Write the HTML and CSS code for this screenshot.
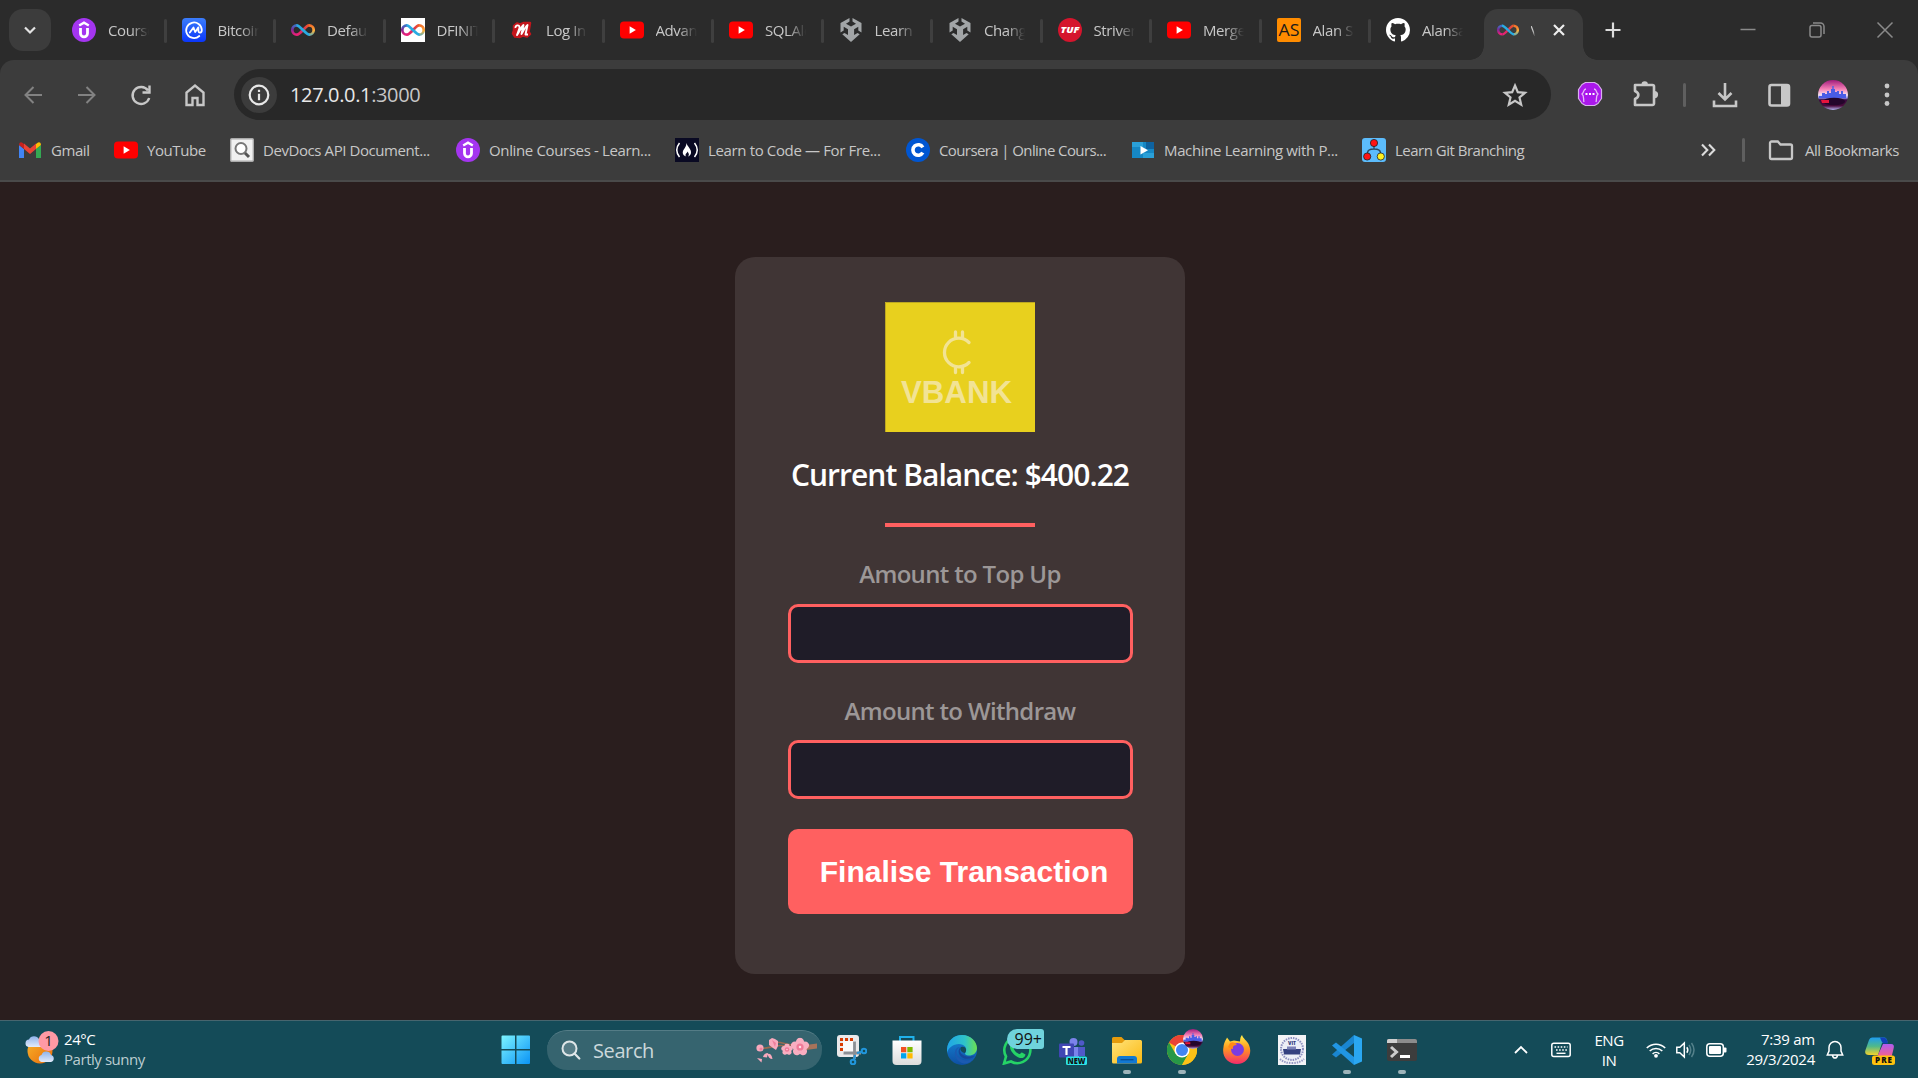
FILE: index.html
```html
<!DOCTYPE html>
<html lang="en">
<head>
<meta charset="utf-8">
<title>VBANK</title>
<link rel="stylesheet" href="styles.css">
</head>
<body>
<svg class="defs" width="0" height="0" aria-hidden="true">
  <defs>
    <linearGradient id="win" x2="1" y2="1"><stop offset="0" stop-color="#7df4ff"/><stop offset="1" stop-color="#0a93f5"/></linearGradient>
    <linearGradient id="cmc" x2="0" y2="1"><stop offset="0" stop-color="#3b7dfb"/><stop offset="1" stop-color="#0a36fa"/></linearGradient>
    <linearGradient id="edgeA" x2="1" y2="0"><stop offset="0" stop-color="#1fa5e8"/><stop offset=".6" stop-color="#2fc3c8"/><stop offset="1" stop-color="#6ce04e"/></linearGradient>
    <linearGradient id="edgeB" x2="0" y2="1"><stop offset="0" stop-color="#1688d8"/><stop offset="1" stop-color="#0e4fa3"/></linearGradient>
    <linearGradient id="fold" x2="1" y2="1"><stop offset="0" stop-color="#ffe37a"/><stop offset="1" stop-color="#fbb912"/></linearGradient>
    <linearGradient id="fox" x2="0" y2="1"><stop offset="0" stop-color="#fff04a"/><stop offset=".45" stop-color="#ff9a1f"/><stop offset="1" stop-color="#f52a6b"/></linearGradient>
    <linearGradient id="sun" x2="1" y2="1"><stop offset="0" stop-color="#f7b52b"/><stop offset="1" stop-color="#ea6a0a"/></linearGradient>
    <linearGradient id="cloud" x2="0" y2="1"><stop offset="0" stop-color="#8fb4ec"/><stop offset="1" stop-color="#e3ebfa"/></linearGradient>
    <linearGradient id="sky" x2="0" y2="1"><stop offset="0" stop-color="#a01c7c"/><stop offset=".3" stop-color="#f47fb5"/><stop offset=".5" stop-color="#f6e2f0"/><stop offset=".6" stop-color="#8f8cf0"/><stop offset=".66" stop-color="#3a0a40"/><stop offset=".86" stop-color="#4a0b3c"/><stop offset="1" stop-color="#b9b6f8"/></linearGradient>
    <linearGradient id="copA" x2="0" y2="1"><stop offset="0" stop-color="#1e9cf0"/><stop offset=".5" stop-color="#4fb98a"/><stop offset="1" stop-color="#f4d22c"/></linearGradient>
    <linearGradient id="copB" x2="0" y2="1"><stop offset="0" stop-color="#b05cf0"/><stop offset="1" stop-color="#f7608a"/></linearGradient>
    <linearGradient id="bag" x2="0" y2="1"><stop offset="0" stop-color="#fff"/><stop offset="1" stop-color="#dcdcdc"/></linearGradient>
    <linearGradient id="infL" x2="0" y2="1"><stop offset="0" stop-color="#3f6fc4"/><stop offset=".45" stop-color="#7a2a9a"/><stop offset="1" stop-color="#ed1e79"/></linearGradient>
    <linearGradient id="infR" x2="0" y2="1"><stop offset="0" stop-color="#f4702a"/><stop offset=".6" stop-color="#fbb03b"/><stop offset="1" stop-color="#7ab0a0"/></linearGradient>
    <linearGradient id="infB" x2="1" y2="0"><stop offset="0" stop-color="#ed1e79"/><stop offset=".5" stop-color="#d8305a"/><stop offset="1" stop-color="#f15a24"/></linearGradient>
    <symbol id="youtube" viewBox="0 0 24 24"><rect x="0" y="3.500" width="24" height="17" rx="4" fill="#f00"/><path d="M9.600 8.300v7.400l6.300-3.700z" fill="#fff"/></symbol>
    <symbol id="udemy" viewBox="0 0 24 24"><circle cx="12" cy="12" r="12" fill="#a435f0"/><path d="M7.200 7.600 12 4.700l4.800 2.900" fill="none" stroke="#fff" stroke-width="2.300"/><path d="M8.500 10v5.200a3.500 3.700 0 0 0 7 0V10" fill="none" stroke="#fff" stroke-width="2.800"/></symbol>
    <symbol id="infinity" viewBox="0 0 24 24"><g fill="none" stroke-width="2.700"><path d="M6 16.700C9.500 16.700 14.500 7.300 18 7.300" stroke="url(#infB)"/><path d="M6 7.300a4.700 4.700 0 0 0 0 9.400" stroke="url(#infL)"/><path d="M18 7.300a4.700 4.700 0 0 1 0 9.400" stroke="url(#infR)"/><path d="M5.500 7.300C9.500 7.300 14.500 16.700 18.500 16.700" stroke="#29abe2"/></g></symbol>
    <symbol id="unity" viewBox="0 0 24 24"><path d="M13.500 0 22.500 5v9.500l-3.200-1.900V8.700l-4.200 2.500V17l3.400-2 2.200 1.300L12 24l-8.700-7.700 2.200-1.300L9 17v-5.800L4.700 8.700v3.900l-3.200 1.900V5l9-5v3.600L7 5.700l5 2.900 5-2.900-3.500-2.100z" fill="#a2a5a7"/></symbol>
    <symbol id="avatar" viewBox="0 0 30 30"><circle cx="15" cy="15" r="15" fill="url(#sky)"/><path d="M1 18v-2h3v-3h3v1h2v-3h2v2h2V9h1.300V6h1.400v3H17v3h2v-1h2v3h2v-3h2v3h3v4z" fill="#4a5ce6"/><ellipse cx="16" cy="21.500" rx="11" ry="3.800" fill="#24052b"/><path d="M3 20h8v3H4z" fill="#e8143c"/></symbol>
    <symbol id="flower" viewBox="-10 -10 20 20"><g fill="#f9aec1"><ellipse cy="-5" rx="4.300" ry="4.800"/><ellipse cy="-5" rx="4.300" ry="4.800" transform="rotate(72)"/><ellipse cy="-5" rx="4.300" ry="4.800" transform="rotate(144)"/><ellipse cy="-5" rx="4.300" ry="4.800" transform="rotate(216)"/><ellipse cy="-5" rx="4.300" ry="4.800" transform="rotate(288)"/></g><circle r="3.800" fill="#f07a98"/><circle r="1.300" fill="#ffdfe6"/></symbol>
  </defs>
</svg>

<header class="browser">
  <div class="tabstrip">
    <button class="tab-search"><svg width="16" height="16" viewBox="0 0 16 16"><path d="m3 5.500 5 5 5-5" fill="none" stroke="#e3e3e3" stroke-width="2.200"/></svg></button>
    <div class="tabs">
      <div class="tab"><svg class="fav"><use href="#udemy"/></svg><span>Courses</span></div>
      <div class="tab"><svg class="fav" viewBox="0 0 24 24"><rect width="24" height="24" rx="4" fill="url(#cmc)"/><path d="M17.300 18A7.800 7.800 0 1 1 19.800 12c0 3.400-3.400 3.600-3.400.6V9.300L13.200 14l-1.700-4.500L7.800 14.500" fill="none" stroke="#fff" stroke-width="1.800" stroke-linecap="round" stroke-linejoin="round"/></svg><span>Bitcoin</span></div>
      <div class="tab"><svg class="fav"><use href="#infinity"/></svg><span>Default</span></div>
      <div class="tab"><svg class="fav" viewBox="0 0 24 24"><rect width="24" height="24" fill="#fff"/><use href="#infinity" width="24" height="24"/></svg><span>DFINITY</span></div>
      <div class="tab"><svg class="fav" viewBox="0 0 24 24"><path d="M4 8l3-2.500 3 1L14 5h6l-1.500 9 1.500 2-3 2.500-4-1-3 1.500-5-.5-2-3 1-3z" fill="#c4161c" stroke="#c4161c" stroke-width="2.500" stroke-linejoin="round"/><path d="M5.500 10c-.5-3 4.500-4 4 0L7 17c2-2 4-8 6.500-10L11.500 16c2-3 4-8 6-9l-2 9.500h2.500" fill="none" stroke="#fff" stroke-width="1.900" stroke-linejoin="round"/></svg><span>Log In</span></div>
      <div class="tab"><svg class="fav"><use href="#youtube"/></svg><span>Advanced</span></div>
      <div class="tab"><svg class="fav"><use href="#youtube"/></svg><span>SQLAlchemy</span></div>
      <div class="tab"><svg class="fav"><use href="#unity"/></svg><span>Learn</span></div>
      <div class="tab"><svg class="fav"><use href="#unity"/></svg><span>Change</span></div>
      <div class="tab"><svg class="fav" viewBox="0 0 24 24"><circle cx="12" cy="12" r="12" fill="#d5152d"/><text x="12" y="15" class="tuf" textLength="19" lengthAdjust="spacingAndGlyphs">TUF</text></svg><span>Striver</span></div>
      <div class="tab"><svg class="fav"><use href="#youtube"/></svg><span>Merge</span></div>
      <div class="tab"><svg class="fav" viewBox="0 0 24 24"><rect width="24" height="24" rx="2" fill="#ff8c00"/><text x="12" y="17.500" class="as" textLength="21" lengthAdjust="spacingAndGlyphs">AS</text></svg><span>Alan S</span></div>
      <div class="tab last"><svg class="fav" viewBox="0 0 16 16"><path fill="#fff" d="M8 0C3.580 0 0 3.580 0 8c0 3.540 2.290 6.530 5.470 7.590.4.070.55-.17.55-.38 0-.19-.01-.82-.01-1.490-2.010.37-2.530-.49-2.690-.94-.09-.23-.48-.94-.82-1.130-.28-.15-.68-.52-.01-.53.63-.01 1.080.58 1.230.82.72 1.210 1.870.87 2.330.66.07-.52.28-.87.51-1.070-1.780-.2-3.640-.89-3.640-3.950 0-.87.31-1.590.82-2.150-.08-.2-.36-1.020.08-2.120 0 0 .67-.21 2.200.82.64-.18 1.320-.27 2-.27s1.360.09 2 .27c1.530-1.040 2.200-.82 2.200-.82.44 1.100.16 1.920.08 2.120.51.56.82 1.270.82 2.150 0 3.070-1.870 3.750-3.650 3.950.29.25.54.73.54 1.480 0 1.070-.01 1.930-.01 2.200 0 .21.15.46.55.38A8.010 8.010 0 0 0 16 8c0-4.420-3.580-8-8-8z"/></svg><span>Alansa</span></div>
      <div class="tab active"><svg class="fav"><use href="#infinity"/></svg><span>V</span><svg class="close" width="14" height="14" viewBox="0 0 14 14"><path d="m2 2 10 10M12 2 2 12" stroke="#eee" stroke-width="2.200"/></svg></div>
    </div>
    <svg class="newtab" width="18" height="18" viewBox="0 0 18 18"><path d="M9 1.500v15M1.500 9h15" stroke="#dcdcdc" stroke-width="2.200"/></svg>
    <div class="winctl">
      <svg width="18" height="18" viewBox="0 0 18 18"><path d="M1.500 8.500h15" stroke="#8a8a8a" stroke-width="1.500"/></svg>
      <svg width="18" height="18" viewBox="0 0 18 18" fill="none" stroke="#8a8a8a" stroke-width="1.500"><rect x="2" y="4.500" width="11" height="11.500" rx="2"/><path d="M5 2h7.500A3.500 3.500 0 0 1 16 5.500V13"/></svg>
      <svg width="18" height="18" viewBox="0 0 18 18"><path d="m1.500 1.500 15 15m0-15-15 15" stroke="#8a8a8a" stroke-width="1.500"/></svg>
    </div>
  </div>

  <div class="toolbar">
    <nav class="nav">
      <svg class="i24 dim" viewBox="0 0 24 24"><path d="M21 12H5M12.500 4l-8 8 8 8"/></svg>
      <svg class="i24 dim" viewBox="0 0 24 24"><path d="M3 12h16M11.500 4l8 8-8 8"/></svg>
      <svg class="i24" viewBox="0 0 24 24"><path d="M19 7.500A8.500 8.500 0 1 0 20.200 15M20.500 2.500v7h-7"/></svg>
      <svg class="i24" viewBox="0 0 24 24"><path d="M3.500 22V9.500L12 2.500l8.500 7V22h-6v-7h-5v7z"/></svg>
    </nav>
    <div class="omnibox">
      <span class="site"><svg width="24" height="24" viewBox="0 0 24 24" fill="none" stroke="#e8e8e8" stroke-width="2.200"><circle cx="12" cy="12" r="9.300"/><path d="M12 10.700v6.500M12 6.700v2.200"/></svg></span>
      <span class="url">127.0.0.1<i>:3000</i></span>
      <svg class="star" width="26" height="26" viewBox="0 0 26 26"><path d="m13 3.500 2.800 6.700 7.200.6-5.500 4.700 1.700 7.100-6.200-3.800-6.200 3.800 1.700-7.100L3 10.800l7.200-.6z" fill="none" stroke="#c7c7c7" stroke-width="2.200"/></svg>
    </div>
    <div class="actions">
      <svg class="ext" width="26" height="26" viewBox="0 0 26 26"><path d="M8.500 1.500h9l3.500 2 3.500 5v9L21 22.500l-3.500 2h-9l-3.500-2-3.500-5v-9l3.500-5z" fill="#aa18ec" stroke="#d8b0ee" stroke-width="1.200" stroke-linejoin="round"/><path d="M9 8c-3 0-1.500 3-4 5 2.500 2 1 5 2 8M17 8c3 0 1.500 3 4 5-2.500 2-1 5-2 8" fill="none" stroke="#e6bcf6" stroke-width="1.300"/><path d="M8.500 13h2m1.500 0h2m1.500 0h2" stroke="#fff" stroke-width="2"/></svg>
      <svg class="i28 puzzle" viewBox="0 0 28 28"><path d="M4 5h17.500A1.500 1.500 0 0 1 23 6.500v17a1.500 1.500 0 0 1-1.500 1.500H4v-6c4.500-2 4.500-6 0-8z" stroke-linejoin="round"/><path d="M10.500 4.500a3.200 3.200 0 0 1 6.400 0zM23.500 11a3.600 3.600 0 0 1 0 7.200z" fill="#c7c7c7" stroke="none"/></svg>
      <b class="vsep"></b>
      <svg class="i28" viewBox="0 0 28 28"><path d="M14 2v16M7.500 12l6.500 6.500 6.500-6.500M3 19.500V25h22v-5.500"/></svg>
      <svg class="i28" viewBox="0 0 28 28"><rect x="4.500" y="4" width="19.500" height="20.500" rx="2"/><path d="M16 4h8v20.500h-8z" fill="#c7c7c7" stroke="none"/></svg>
      <svg width="30" height="30"><use href="#avatar"/></svg>
      <svg class="dots" width="6" height="28" viewBox="0 0 6 28" fill="#c7c7c7"><circle cx="3" cy="5" r="2.400"/><circle cx="3" cy="14" r="2.400"/><circle cx="3" cy="22.500" r="2.400"/></svg>
    </div>
  </div>

  <div class="bookmarks">
    <a class="bm gm"><svg class="fav" viewBox="0 0 24 24"><path d="M1 20V7l5 4v9z" fill="#4285f4"/><path d="M18 11l5-4v13h-5z" fill="#34a853"/><path d="M18 6l2-1.500Q23 3.500 23 7l-5 4z" fill="#fbbc04"/><path d="M6 6 4 4.500Q1 3.500 1 7l5 4z" fill="#c5221f"/><path d="M6 5.500l6 5 6-5V11l-6 5-6-5z" fill="#ea4335"/></svg><span>Gmail</span></a>
    <a class="bm yt"><svg class="fav"><use href="#youtube"/></svg><span>YouTube</span></a>
    <a class="bm dd"><svg class="fav" viewBox="0 0 24 24"><rect x=".7" y=".7" width="22.600" height="22.600" rx="1" fill="#f1f1f1" stroke="#aaa" stroke-width="1.400"/><circle cx="11" cy="10.500" r="5.500" fill="#fff" stroke="#777" stroke-width="2"/><path d="m15 15 4 4" stroke="#555" stroke-width="3"/></svg><span>DevDocs API Document...</span></a>
    <a class="bm ud"><svg class="fav"><use href="#udemy"/></svg><span>Online Courses - Learn...</span></a>
    <a class="bm fc"><svg class="fav" viewBox="0 0 24 24"><rect width="24" height="24" fill="#0a0a23"/><path d="M4.500 5q-5.500 7 0 14M19.500 5q5.500 7 0 14" fill="none" stroke="#fff" stroke-width="1.500"/><path d="M11.500 5c1 4 5 6 4.500 10-.3 2-1.500 3-3 3.500 1.500-1.500 1-3-.5-5-.2 1.500-2 2-2 3.500 0 .7.300 1.200.8 1.500-3.500-1-4.500-4-2.500-7 1.500-2.300 2.500-3.500 2.700-6.500z" fill="#fff"/></svg><span>Learn to Code — For Fre...</span></a>
    <a class="bm co"><svg class="fav" viewBox="0 0 24 24"><circle cx="12" cy="12" r="12" fill="#0056d2"/><path d="M16.800 9.300a5.300 5.300 0 1 0 0 5.400" fill="none" stroke="#fff" stroke-width="3.600"/></svg><span>Coursera | Online Cours...</span></a>
    <a class="bm ml"><svg class="fav" viewBox="0 0 24 24"><rect x="1" y="4" width="22" height="16" fill="#1687c4"/><path d="M1 4h11v5H1zM12 15h11v5H12z" fill="#2aa0d8"/><path d="M15 4h8v7h-8z" fill="#0d62a0"/><path d="M9.500 8v8.500l7.500-4.200z" fill="#fff"/></svg><span>Machine Learning with P...</span></a>
    <a class="bm gb"><svg class="fav" viewBox="0 0 24 24"><rect width="24" height="24" rx="3" fill="#5cbcfc"/><path d="M12 7v4M5.500 17v-2q0-4 6.500-4t6.500 4v2" fill="none" stroke="#2a4a60" stroke-width="1.300"/><g stroke="#222" stroke-width=".8"><circle cx="12" cy="5" r="3.600" fill="#ff1414"/><circle cx="5.200" cy="18.500" r="3.600" fill="#ff1414"/><circle cx="18.800" cy="18.500" r="3.600" fill="#fff01e"/></g></svg><span>Learn Git Branching</span></a>
    <div class="bm-end">
      <svg width="16" height="16" viewBox="0 0 16 16"><path d="m2 2.500 5.300 5.500L2 13.500m7-11L14.300 8 9 13.500" fill="none" stroke="#dcdcdc" stroke-width="2.100"/></svg>
      <b class="vsep"></b>
      <svg class="folder" width="26" height="22" viewBox="0 0 26 22"><path d="M3.500 2.500h6.300l2.700 3h10a1.500 1.500 0 0 1 1.500 1.500v11.500a1.500 1.500 0 0 1-1.500 1.500h-19A1.500 1.500 0 0 1 2 18.500V4a1.500 1.500 0 0 1 1.500-1.500z" fill="none" stroke="#c7c7c7" stroke-width="2.300"/></svg>
      <span class="allbm">All Bookmarks</span>
    </div>
  </div>
</header>

<main class="page">
  <section class="card">
    <svg class="logo" width="150" height="130" viewBox="0 0 150 130"><rect width="150" height="130" fill="#e8d01e"/><path d="M.5 130V.5H150" fill="none" stroke="#bda822"/><path d="M84 40.500a14.300 14.300 0 1 0 0 20M70.500 35v-5M77.500 35v-5M70.500 66v4.500M77.500 66v4.500" fill="none" stroke="#f2e394" stroke-width="3.300" stroke-linecap="round"/><text x="16" y="101" class="logo-text" textLength="111" lengthAdjust="spacingAndGlyphs">VBANK</text></svg>
    <h1>Current Balance: <span>$400.22</span></h1>
    <div class="divider"></div>
    <form>
      <h2 class="l1">Amount to Top Up</h2>
      <input type="text">
      <h2 class="l2">Amount to Withdraw</h2>
      <input type="text">
      <button type="button" class="submit">Finalise Transaction</button>
    </form>
  </section>
</main>

<footer class="taskbar">
  <div class="weather">
    <svg width="34" height="38" viewBox="0 0 34 38"><circle cx="15" cy="20" r="12.500" fill="url(#sun)"/><path d="M3.500 16a3.800 3.800 0 0 1 .5-7.500 5.500 5.500 0 0 1 10 0H18V16z" fill="url(#cloud)"/><path d="M16.500 31a3.600 3.600 0 0 1 0-7 5 5 0 0 1 9.500 0 3.600 3.600 0 0 1 0 7z" fill="url(#cloud)"/><circle cx="23.500" cy="10" r="10" fill="#ff99a4"/><text x="23.500" y="15" class="badge-text">1</text></svg>
    <div class="stack"><span>24°C</span><span class="muted">Partly sunny</span></div>
  </div>
  <div class="center">
    <svg class="start" width="30" height="30" viewBox="0 0 30 30"><path d="M.5 1.500a1 1 0 0 1 1-1H14V14H.5zM15.500.5H28a1 1 0 0 1 1 1V14H15.500zM.5 15.500H14V29H1.500a1 1 0 0 1-1-1zM15.500 15.500H29V28a1 1 0 0 1-1 1H15.500z" fill="url(#win)"/></svg>
    <div class="search">
      <svg width="20" height="20" viewBox="0 0 20 20"><circle cx="8.500" cy="8.500" r="7" fill="#577d87" stroke="#dfe6e8" stroke-width="2"/><path d="m13.500 13.500 4.800 5" stroke="#dfe6e8" stroke-width="2.200" stroke-linecap="round"/></svg>
      <span>Search</span>
      <svg class="sakura" width="62" height="28" viewBox="0 0 62 28"><path d="M61 10.500c-14 1-20 0-28-2-5-1-10-3-16-2M42 10c-10 2-14-2-22 0-6 1-10 3-15 2" fill="none" stroke="#9b6a50" stroke-width="1.600"/><path d="M50 9l11-1.500v5L50 14z" fill="#a8735a"/><circle cx="4" cy="12" r="3.600" fill="#f9a9bd"/><circle cx="5" cy="13" r="1.600" fill="#ef7f9b"/><path d="M13 4l3-2 3 1 3 2v5l-2 4-3-2-4-3z" fill="#f9a9bd"/><path d="M16 4l4 3-1 4z" fill="#ef7f9b"/><use href="#flower" x="34.500" y="1.500" width="19" height="19"/><use href="#flower" x="25" y="7.500" width="12" height="12"/><path d="M1 22l5 1-.5 3.500zM7 21q1-4 5-4l-1 4.500zM11.500 18q4-1 5 5-4 0-5-5z" fill="#f9a9bd"/></svg>
    </div>
    <div class="apps">
      <div class="app"><svg viewBox="0 0 30 30"><rect width="22" height="22" rx="3" fill="#e9e9ea"/><path d="M6 6h12v12H6z" fill="#fbfbfb"/><path d="M4.500 16V4.500H16" fill="none" stroke="#d83b01" stroke-width="3" stroke-dasharray="3 2"/><path d="M17.500 6.500V24M6.500 18H24" stroke="#8b8f94" stroke-width="2.800"/><g fill="none" stroke="#2196dc" stroke-width="2"><path d="M18 20l-1 5M20 18l4-1"/><circle cx="27" cy="16" r="2.300"/><circle cx="16" cy="27" r="2.300"/></g></svg></div>
      <div class="app"><svg viewBox="0 0 30 30"><path d="M8 7V2h13.500v5" fill="none" stroke="#1fb1ea" stroke-width="2"/><path d="M.5 5.500h29V26a4 4 0 0 1-4 4h-21a4 4 0 0 1-4-4z" fill="url(#bag)"/><path d="M9 12h5.300v5.300H9z" fill="#f25022"/><path d="M15.300 12h5.300v5.300h-5.300z" fill="#7fba00"/><path d="M9 18.200h5.300v5.300H9z" fill="#00a4ef"/><path d="M15.300 18.200h5.300v5.300h-5.300z" fill="#ffb900"/></svg></div>
      <div class="app"><svg viewBox="0 0 30 30"><circle cx="15" cy="15" r="15" fill="url(#edgeB)"/><path d="M0 14C1 5 7 0 15 0c9 0 15 7 15 13 0 5-4 7.500-8 7.500-3 0-5-1.500-3.500-3C21 13 17 9 12 9 6 9 1 13 0 18z" fill="url(#edgeA)"/><path d="M13 12c-4 2-4.500 7-1 10.500 4 4 11 3.500 15.500.5C24 27 20 29 17 28.500 9 27 6 19 9 14q1.500-2 4-2z" fill="#1b5ab0"/><path d="M14 12c-2.500 3-.5 7 3 8.500 4 2 8 1 11 0-2 3-9 5-13.500 1.500C11 19 10.500 14 14 12z" fill="#16489a"/><path d="M14 12q4-1 5 2 .5 2-1 4-2 0-4-2-1.500-2 0-4z" fill="#144b58"/></svg></div>
      <div class="app"><svg viewBox="0 0 30 30"><path d="M2 28.500l2-7A13 13 0 1 1 9 26.500z" fill="none" stroke="#25d366" stroke-width="2.600"/><path d="M9 9c2-2 3 0 4 2.500.3 1-2 1.500-1 3 1.500 2.500 3 3.500 5 4.500 1.500.5 2-2 3-1.500l3.500 2c-.5 3-3 4-5.500 3.500C13 21.500 8 16 8 12q0-1.500 1-3z" fill="#25d366"/></svg><em class="count">99+</em></div>
      <div class="app"><svg viewBox="0 0 30 30"><circle cx="16.500" cy="7" r="4" fill="#7b83eb"/><circle cx="24.500" cy="8" r="2.800" fill="#5059c9"/><path d="M10 12h12v11H10z" fill="#7b83eb"/><path d="M21 12h7v9h-7z" fill="#5059c9"/><rect x="2" y="8.500" width="15" height="14" rx="1" fill="#4046b4"/><path d="M5.500 12h8M9.500 12v8" stroke="#fff" stroke-width="2.200"/><rect x="9" y="21.500" width="21" height="8.500" rx="1.500" fill="#2ce3e6"/><text x="19.500" y="28.700" class="new" textLength="18" lengthAdjust="spacingAndGlyphs">NEW</text></svg></div>
      <div class="app run"><svg viewBox="0 0 30 30"><path d="M0 3.500a1.500 1.500 0 0 1 1.500-1.500h8l3 3H29v6H0z" fill="#e59b0c"/><path d="M0 8h10l3-3h15.500A1.500 1.500 0 0 1 30 6.500V27a1.500 1.500 0 0 1-1.500 1.500h-27A1.500 1.500 0 0 1 0 27z" fill="url(#fold)"/><path d="M5 28.500V24a3 3 0 0 1 3-3h14a3 3 0 0 1 3 3v4.500z" fill="#1279d2"/><path d="M8.500 24.700h13" stroke="#0b4f94" stroke-width="1.300"/></svg></div>
      <div class="app run"><svg viewBox="0 0 30 30"><circle cx="15" cy="15" r="15" fill="#fbc117"/><path d="M15 15 2 7.500A15 15 0 0 1 28 7.500z" fill="#ea4335"/><path d="M2 7.500A15 15 0 0 0 15 30l6.500-11.200L8.500 18.800z" fill="#279847"/><path d="M28 7.500H15V15l6.500 3.800L15 30A15 15 0 0 0 28 7.500z" fill="#fbc117"/><circle cx="15" cy="15" r="7.500" fill="#fff"/><circle cx="15" cy="15" r="6" fill="#4285f4"/></svg><svg class="mini"><use href="#avatar"/></svg></div>
      <div class="app"><svg viewBox="0 0 30 30"><path d="M1.500 12C2 7 4 5 5 2.500l3 4 4-1 6 1C18 3 19 1 20 0c1 4 5 5 7 10 4 9-2 19-12 19C6 29-.5 22 1.500 12z" fill="url(#fox)"/><circle cx="15.500" cy="14.500" r="6.500" fill="#7a3ce0"/><path d="M8 8q4-2 7 2-5 0-4 4-3 0-5-2z" fill="#ff8a16"/></svg></div>
      <div class="app"><svg viewBox="0 0 30 30"><rect x="1" width="28" height="30" fill="#f3f3f6"/><circle cx="15" cy="14" r="11" fill="#eceef7" stroke="#8c8fc0" stroke-width="2" stroke-dasharray="1.500 1"/><path d="M6 14h18l-1 5.500H7z" fill="#34407f"/><path d="M10 11.500h9v3h-9z" fill="#7c82b8"/><path d="M3 24q4 4 12 4t12-4" fill="none" stroke="#9598c4" stroke-width="2" stroke-dasharray="1.500 1"/><text x="15" y="10" class="vit">VIT</text></svg></div>
      <div class="app run"><svg viewBox="0 0 30 30"><path d="M22 0 30 3.500v23L22 30z" fill="#2aa7f2"/><path d="M22 0v8L4 22.500 0 19.500z" fill="#1a86d0"/><path d="M22 30v-8L4 7.500 0 10.500z" fill="#2196e3"/></svg></div>
      <div class="app run"><svg viewBox="0 0 30 30"><rect y="4" width="30" height="22" rx="2" fill="#3d3d3d"/><path d="M0 8V6a2 2 0 0 1 2-2h26a2 2 0 0 1 2 2v2z" fill="#8c8c8c"/><path d="M0 8V6a2 2 0 0 1 2-2h8v4z" fill="#cfcfcf"/><path d="m4 12 5.500 5L4 22" fill="none" stroke="#ccc" stroke-width="3"/><path d="M13 21.500h10" stroke="#fff" stroke-width="3"/></svg></div>
    </div>
  </div>
  <div class="tray">
    <svg class="chev" width="14" height="10" viewBox="0 0 14 10"><path d="m1 8 6-6 6 6" fill="none" stroke="#fff" stroke-width="1.800"/></svg>
    <svg class="kbd" width="20" height="16" viewBox="0 0 20 16"><rect x=".8" y="1.300" width="18.400" height="13.200" rx="2" fill="none" stroke="#fff" stroke-width="1.500"/><path d="M3.500 5h13M5 8h11" stroke="#fff" stroke-width="1.600" stroke-dasharray="1.600 1.500"/><path d="M5.500 11.300h9" stroke="#fff" stroke-width="1.400"/></svg>
    <div class="stack lang"><span>ENG</span><span>IN</span></div>
    <svg class="wifi" width="20" height="16" viewBox="0 0 20 16"><g fill="none" stroke="#fff" stroke-width="1.600"><path d="M.8 6a13 13 0 0 1 18.400 0M3.700 9a9 9 0 0 1 12.600 0M6.600 11.800a5 5 0 0 1 6.800 0"/></g><circle cx="10" cy="13.800" r="1.900" fill="#fff"/></svg>
    <svg class="vol" width="20" height="18" viewBox="0 0 20 18" fill="none" stroke="#fff" stroke-width="1.500"><path d="M.8 6.300h3L8.300 2v14l-4.500-4.300h-3z"/><path d="M10.800 6.300q2 2.700 0 5.400"/><path d="M13 4q3.500 5 0 10M15.500 2q5 7 0 14" stroke="#54808a"/></svg>
    <svg class="bat" width="21" height="14" viewBox="0 0 21 14"><rect x=".8" y=".8" width="16.500" height="12.400" rx="3" fill="none" stroke="#fff" stroke-width="1.500"/><rect x="3" y="3" width="12" height="8" rx="1" fill="#fff"/><path d="M18 4.500h1.500a1 1 0 0 1 1 1v3a1 1 0 0 1-1 1H18z" fill="#fff"/></svg>
    <div class="stack clock"><span>7:39 am</span><span>29/3/2024</span></div>
    <svg class="bell" width="18" height="20" viewBox="0 0 18 20" fill="none" stroke="#fff" stroke-width="1.500"><path d="M9 1.500a6 6 0 0 0-6 6V11l-1.700 4h15.400L15 11V7.500a6 6 0 0 0-6-6zM6.500 15.500q.5 2.500 2.500 2.500t2.500-2.500"/></svg>
    <svg class="cop" width="30" height="30" viewBox="0 0 30 30"><path d="M7 2.500h12q3 0 3.500 5L17 8l-4 12H4q-5 0-3.500-5L4 5q.8-2.500 3-2.500z" fill="url(#copA)"/><path d="M15 2.500h4q3 0 4 6h-5q-2-3-3-6z" fill="#1240b8"/><path d="M18 9h8q4 0 2.500 5l-2 8H12z" fill="url(#copB)"/><rect x="7" y="20.500" width="23" height="9.500" rx="2.500" fill="#ffc20e"/><text x="18.500" y="28.300" class="pre" textLength="17">PRE</text></svg>
  </div>
</footer>
</body>
</html>
```
FILE: styles.css
```css
* { box-sizing: border-box; }
body {
  margin: 0;
  width: 1918px;
  height: 1078px;
  overflow: hidden;
  display: flex;
  flex-direction: column;
  background: #2a1e1e;
  font-family: "Open Sans", "Noto Sans", sans-serif;
  font-size: 15px;
  color: #c7c7c7;
}
svg { display: block; flex: none; }
.defs { position: absolute; }

/* Browser chrome */
.browser { background: #2b2b2b; height: 182px; flex: none; border-bottom: 2px solid #4a4a4a; }
.tabstrip { height: 60px; display: flex; align-items: center; padding-left: 9px; }
.tab-search {
  width: 42px; height: 42px; border: 0; border-radius: 14px; background: #3c3c3c;
  display: flex; align-items: center; justify-content: center; padding: 0;
}
.tabs { display: flex; height: 51px; align-self: flex-end; margin-left: 9px; }
.tab {
  width: 109.5px; padding: 0 15px 9px 12px; display: flex; align-items: center; gap: 12px;
  position: relative;
}
.tab::after {
  content: ""; position: absolute; right: 3px; top: 10px; width: 3px; height: 24px;
  border-radius: 2px; background: #3f3f3f;
}
.tab.last::after, .tab.active::after { display: none; }
.fav { width: 24px; height: 24px; }
.tab span {
  width: 42px; overflow: hidden; white-space: nowrap; letter-spacing: -.4px;
  -webkit-mask-image: linear-gradient(90deg, #000 55%, transparent 98%);
  mask-image: linear-gradient(90deg, #000 55%, transparent 98%);
}
.tab.active {
  width: 99px; background: #3c3c3c; border-radius: 14px 14px 0 0;
  padding: 0 0 9px 13px; gap: 0;
}
.tab.active::before, .tab.active::after {
  content: ""; display: block; position: absolute; bottom: 0; top: auto; width: 14px; height: 14px;
  border-radius: 0;
}
.tab.active::before { left: -14px; background: radial-gradient(circle at 0 0, transparent 13.5px, #3c3c3c 14px); }
.tab.active::after { right: -14px; background: radial-gradient(circle at 100% 0, transparent 13.5px, #3c3c3c 14px); }
.tab.active .fav { width: 22px; }
.tab.active span { width: 4px; margin-left: 12px; }
.close { margin-left: 17px; }
.newtab { margin-left: 21px; }
.winctl { margin-left: auto; display: flex; gap: 50.5px; padding-right: 24px; }

.toolbar {
  height: 62px; padding-top: 9px; background: #3c3c3c; border-radius: 14px 14px 0 0;
  display: flex; align-items: flex-start;
}
.nav { width: 234px; height: 51px; padding-left: 21px; display: flex; align-items: center; gap: 30px; }
.i24 { width: 24px; height: 24px; fill: none; stroke: #c7c7c7; stroke-width: 2.4; }
.i24.dim { stroke: #828282; stroke-width: 2; }
.i28 { width: 28px; height: 28px; fill: none; stroke: #c7c7c7; stroke-width: 2.6; }
.omnibox {
  width: 1317px; height: 51px; border-radius: 26px; background: #282828;
  display: flex; align-items: center; padding: 0 23px 0 7px;
}
.site {
  width: 36px; height: 36px; border-radius: 50%; background: #3c3c3c;
  display: flex; align-items: center; justify-content: center;
}
.url { margin-left: 13px; font-size: 20px; letter-spacing: -.36px; color: #e8e8e8; }
.url i { font-style: normal; color: #c7c7c7; }
.star { margin-left: auto; }
.actions { flex: 1; height: 51px; display: flex; align-items: center; padding-left: 26px; }
.ext { margin-bottom: 2px; }
.puzzle { margin-left: 28px; margin-bottom: 2px; }
.vsep { width: 3px; height: 24px; border-radius: 2px; background: #5f5f5f; }
.actions .vsep { margin-left: 24px; }
.actions > :nth-child(4) { margin-left: 25px; }
.actions > :nth-child(5) { margin-left: 26px; }
.actions > :nth-child(6) { margin-left: 25px; }
.dots { margin-left: 36px; }

.bookmarks { height: 58px; background: #3c3c3c; display: flex; align-items: center; padding: 0 0 2px 18px; }
.bm { display: flex; align-items: center; gap: 9px; white-space: nowrap; letter-spacing: -.42px; }
.gm { width: 96px; }
.yt { width: 116px; }
.dd { width: 226px; }
.ud { width: 219px; letter-spacing: -.36px; }
.fc { width: 231px; letter-spacing: -.36px; }
.co { width: 225px; letter-spacing: -.6px; }
.ml { width: 231px; letter-spacing: -.36px; }
.gb { letter-spacing: -.5px; }
.bm-end { margin-left: auto; display: flex; align-items: center; padding-right: 19px; letter-spacing: -.45px; }
.bm-end .vsep { margin-left: 26px; }
.folder { margin: 0 11px 0 23px; }

/* Page */
.page { flex: 1; display: flex; justify-content: center; align-items: flex-start; padding: 75px 0 0 2px; }
.card {
  width: 450px; height: 717px; border-radius: 20px; background: #403535; padding-top: 45px;
  display: flex; flex-direction: column; align-items: center;
}
.logo-text { font: 700 31.5px "Liberation Sans", Arial, sans-serif; fill: #f2e394; }
h1 { margin: 22px 0 0; font-size: 30px; line-height: 42px; font-weight: 600; color: #fff; letter-spacing: -.97px; white-space: nowrap; }
.divider { width: 150px; height: 4px; background: #ff6060; margin-top: 27px; }
form { width: 345px; display: flex; flex-direction: column; }
h2 { margin: 0; font-size: 24px; line-height: 34px; font-weight: 600; color: #9c9797; text-align: center; letter-spacing: -.66px; }
.l1 { margin: 30px 0 13px; }
.l2 { margin: 31px 0 12px; }
input { width: 345px; height: 59px; border: 3px solid #ff6060; border-radius: 10px; background: #1f1c28; padding: 0 20px; }
.submit {
  height: 85px; margin-top: 30px; border: 0; border-radius: 10px; background: #ff6060; color: #fff;
  font: 700 30px "Liberation Sans", Arial, sans-serif; padding: 0 0 0 8px; white-space: nowrap;
}

/* Taskbar */
.taskbar {
  height: 58px; flex: none; background: #144b58; border-top: 1px solid #47656e; color: #fff;
  display: flex; align-items: center;
}
.stack { display: flex; flex-direction: column; line-height: 20px; font-size: 15px; letter-spacing: -.45px; white-space: nowrap; padding-bottom: 2px; }
.muted { color: #bccdd1; }
.weather { width: 501px; padding-left: 25px; display: flex; align-items: center; gap: 5px; }
.badge-text { font-size: 15px; text-anchor: middle; fill: #222; }
.center { display: flex; align-items: center; width: 1013px; }
.search {
  margin-left: 16px; width: 275px; height: 40px; border-radius: 20px; background: #36646f;
  border-top: 1px solid #547c86; display: flex; align-items: center; padding: 0 4px 0 14px;
}
.search span { margin-left: 12px; font-size: 20px; letter-spacing: -.4px; color: #ccd8db; }
.sakura { margin-left: auto; }
.apps { display: flex; margin-left: 2px; }
.app { width: 55px; height: 57px; display: flex; align-items: center; justify-content: center; position: relative; }
.app > svg { width: 30px; height: 30px; }
.app.run::after {
  content: ""; position: absolute; bottom: 4px; left: 23.5px; width: 8px; height: 4px;
  border-radius: 2px; background: #9db4ba;
}
.count {
  position: absolute; left: 18px; top: 8px; width: 37px; height: 20px; border-radius: 10px 3px 3px 10px;
  background: #6fd3dc; color: #111; font: 16px/20px "Open Sans", sans-serif; text-align: right; padding-right: 2px;
}
.app > .mini { position: absolute; left: 29px; top: 8px; width: 20px; height: 20px; }
.tray { display: flex; align-items: center; }
.kbd { margin-left: 23px; }
.lang { width: 40px; margin-left: 18px; align-items: center; padding-bottom: 0; }
.wifi { margin-left: 17px; }
.vol { margin-left: 10px; }
.bat { margin-left: 10px; }
.clock { width: 88px; align-items: flex-end; margin-left: 0; letter-spacing: -.25px; }
.bell { margin-left: 11px; }
.cop { margin-left: 21px; }
.tuf, .as, .new, .vit, .pre { text-anchor: middle; font-family: "Open Sans", sans-serif; font-weight: 800; }
.tuf { font-size: 8.5px; font-style: italic; fill: #fff; }
.as { font-size: 16px; font-weight: 400; fill: #1a1a1a; }
.new { font-size: 8.5px; fill: #111; }
.vit { font-size: 5px; fill: #34407f; }
.pre { font-size: 8px; fill: #111; }
```
